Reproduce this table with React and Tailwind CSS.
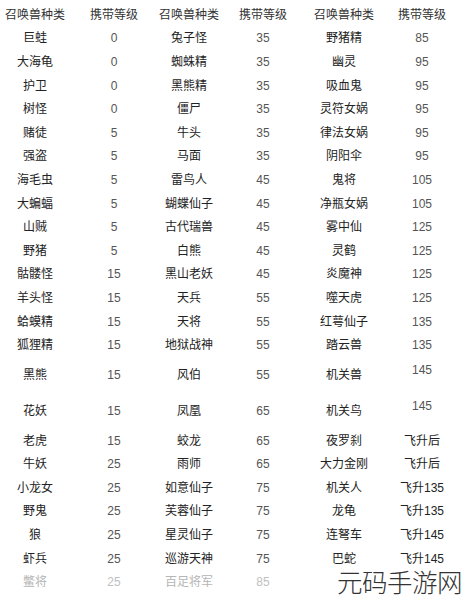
const rows = [
  ["巨蛙", "0", "兔子怪", "35", "野猪精", "85"],
  ["大海龟", "0", "蜘蛛精", "35", "幽灵", "95"],
  ["护卫", "0", "黑熊精", "35", "吸血鬼", "95"],
  ["树怪", "0", "僵尸", "35", "灵符女娲", "95"],
  ["赌徒", "5", "牛头", "35", "律法女娲", "95"],
  ["强盗", "5", "马面", "35", "阴阳伞", "95"],
  ["海毛虫", "5", "雷鸟人", "45", "鬼将", "105"],
  ["大蝙蝠", "5", "蝴蝶仙子", "45", "净瓶女娲", "105"],
  ["山贼", "5", "古代瑞兽", "45", "雾中仙", "125"],
  ["野猪", "5", "白熊", "45", "灵鹤", "125"],
  ["骷髅怪", "15", "黑山老妖", "45", "炎魔神", "125"],
  ["羊头怪", "15", "天兵", "55", "噬天虎", "125"],
  ["蛤蟆精", "15", "天将", "55", "红萼仙子", "135"],
  ["狐狸精", "15", "地狱战神", "55", "踏云兽", "135"],
  ["黑熊", "15", "风伯", "55", "机关兽", "145", "tall"],
  ["花妖", "15", "凤凰", "65", "机关鸟", "145", "tall"],
  ["老虎", "15", "蛟龙", "65", "夜罗刹", "飞升后"],
  ["牛妖", "25", "雨师", "65", "大力金刚", "飞升后"],
  ["小龙女", "25", "如意仙子", "75", "机关人", "飞升135"],
  ["野鬼", "25", "芙蓉仙子", "75", "龙龟", "飞升135"],
  ["狼", "25", "星灵仙子", "75", "连弩车", "飞升145"],
  ["虾兵", "25", "巡游天神", "75", "巴蛇", "飞升145"],
  ["鳖将", "25", "百足将军", "85", "", "", "faded"],
];

const cols = "grid grid-cols-[70px_88px_62px_86px_76px_80px] items-center text-center whitespace-nowrap";

function Row({ r }) {
  const tall = r[6] === "tall";
  const faded = r[6] === "faded";
  const name = faded ? "text-[#b5b5b5]" : "text-[#222]";
  const num = faded ? "text-[#c0c0c0]" : "text-[#555]";
  return (
    <div className={`${cols} ${tall ? "h-[36px]" : "h-[23.6px]"}`}>
      <div className={name}>{r[0]}</div>
      <div className={num}>{r[1]}</div>
      <div className={name}>{r[2]}</div>
      <div className={num}>{r[3]}</div>
      <div className={name}>{r[4]}</div>
      <div className={`${/^\d/.test(r[5]) ? num : name} ${tall ? "-translate-y-[5px]" : ""}`}>
        {r[5]}
      </div>
    </div>
  );
}

export default function App() {
  return (
    <div className="relative w-[462px] h-[600px] overflow-hidden bg-white font-['Liberation_Sans','Noto_Sans_CJK_SC',sans-serif] text-[12px] leading-[14px]">
      <div className="pt-[3px]">
        <div className={`${cols} h-[23.6px] text-[#333]`}>
          <div>召唤兽种类</div>
          <div>携带等级</div>
          <div>召唤兽种类</div>
          <div>携带等级</div>
          <div>召唤兽种类</div>
          <div>携带等级</div>
        </div>
        {rows.map((r, i) => (
          <Row key={i} r={r} />
        ))}
      </div>

      {/* watermark */}
      <div className="absolute right-0 bottom-0 w-[132px] h-[33px] bg-white flex items-start justify-end pt-[1px]">
        <div className="font-['Noto_Sans_CJK_SC',sans-serif] font-light text-[25.5px] leading-[26px] text-[#333] tracking-[-0.5px]">
          元码手游网
        </div>
      </div>
    </div>
  );
}
